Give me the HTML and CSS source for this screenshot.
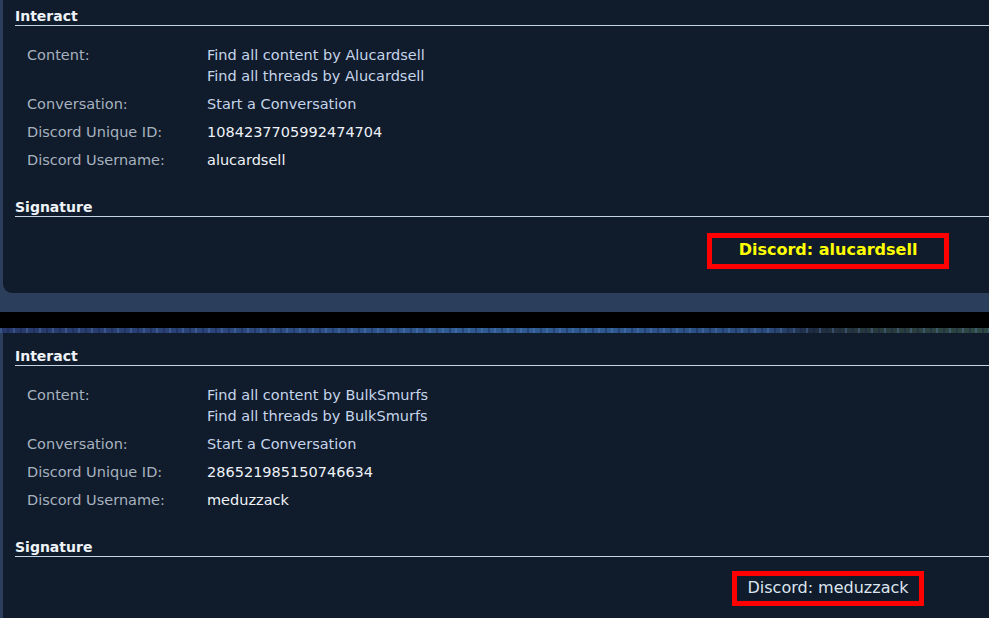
FILE: index.html
```html
<!DOCTYPE html>
<html>
<head>
<meta charset="utf-8">
<link rel="stylesheet" href="styles.css">
</head>
<body>
<div class="page">
  <section class="frame frame-top">
    <div class="panel panel-top">
      <h3 class="block-head">Interact</h3>
      <div class="info">
        <div class="row">
          <div class="label">Content:</div>
          <div class="value">
            <a class="link">Find all content by Alucardsell</a>
            <a class="link">Find all threads by Alucardsell</a>
          </div>
        </div>
        <div class="row">
          <div class="label">Conversation:</div>
          <div class="value"><a class="link">Start a Conversation</a></div>
        </div>
        <div class="row">
          <div class="label">Discord Unique ID:</div>
          <div class="value">1084237705992474704</div>
        </div>
        <div class="row">
          <div class="label">Discord Username:</div>
          <div class="value">alucardsell</div>
        </div>
      </div>
      <h3 class="block-head sig-head">Signature</h3>
      <div class="signature">
        <div class="sig-box sig-bold">Discord: alucardsell</div>
      </div>
    </div>
  </section>
  <div class="divider"></div>
  <div class="texture"></div>
  <section class="frame frame-bottom">
    <div class="panel panel-bottom">
      <h3 class="block-head">Interact</h3>
      <div class="info">
        <div class="row">
          <div class="label">Content:</div>
          <div class="value">
            <a class="link">Find all content by BulkSmurfs</a>
            <a class="link">Find all threads by BulkSmurfs</a>
          </div>
        </div>
        <div class="row">
          <div class="label">Conversation:</div>
          <div class="value"><a class="link">Start a Conversation</a></div>
        </div>
        <div class="row">
          <div class="label">Discord Unique ID:</div>
          <div class="value">286521985150746634</div>
        </div>
        <div class="row">
          <div class="label">Discord Username:</div>
          <div class="value">meduzzack</div>
        </div>
      </div>
      <h3 class="block-head sig-head">Signature</h3>
      <div class="signature signature-tight">
        <div class="sig-box sig-plain">Discord: meduzzack</div>
      </div>
    </div>
  </section>
</div>
</body>
</html>
```
FILE: styles.css
```css
html, body {
  margin: 0;
  padding: 0;
  background: #101b2b;
  overflow: hidden;
  width: 989px;
  height: 618px;
}
body {
  font-family: "DejaVu Sans", Verdana, sans-serif;
  font-size: 14.5px;
  color: #e6edf5;
}
.page {
  width: 989px;
  height: 618px;
  overflow: hidden;
  display: flex;
  flex-direction: column;
}
.frame {
  background: #2b3f5c;
  padding-left: 3px;
  flex: none;
}
.frame-top {
  padding-bottom: 19px;
}
.panel {
  background: #101b2b;
  padding: 0 0 0 12px;
  box-sizing: border-box;
}
.panel-top {
  height: 293px;
  padding-top: 7px;
  border-bottom-left-radius: 9px;
}
.panel-bottom {
  height: 285px;
  padding-top: 14px;
}
.divider {
  height: 16px;
  background: #000;
  flex: none;
}
.texture {
  height: 5px;
  flex: none;
  background:
    repeating-linear-gradient(90deg, rgba(90, 130, 190, 0.35) 0 2px, transparent 2px 7px, rgba(20, 30, 70, 0.35) 7px 9px, transparent 9px 13px),
    linear-gradient(90deg, #27396a 0%, #2a4478 20%, #2f5a92 45%, #2d5890 62%, #2a4a7a 78%, #1f2c40 82%, #283a3c 88%, #2f4a44 100%);
}
.block-head {
  margin: 0;
  font-size: 14px;
  font-weight: bold;
  line-height: 18px;
  color: #eef3f8;
  border-bottom: 1px solid #c3d4e3;
}
.info {
  padding: 19px 0 0 12px;
  display: flex;
  flex-direction: column;
  gap: 7px;
}
.row {
  display: flex;
  line-height: 21px;
}
.label {
  width: 180px;
  flex: none;
  color: #a7b2bf;
}
.value {
  display: flex;
  flex-direction: column;
  color: #eef2f7;
}
.link {
  color: #c5d5ea;
}
.sig-head {
  margin-top: 27px;
}
.signature {
  display: flex;
  justify-content: center;
  padding: 16px 0 0 652px;
}
.signature-tight {
  padding-top: 14px;
}
.sig-box {
  border: 5px solid #ff0000;
  box-sizing: border-box;
  white-space: nowrap;
}
.sig-bold {
  height: 36px;
  padding: 0 27px;
  line-height: 24px;
  font-size: 16px;
  font-weight: bold;
  color: #ffff00;
}
.sig-plain {
  height: 35px;
  padding: 0 10px;
  line-height: 24px;
  font-size: 16px;
  color: #dde6f0;
}
```
